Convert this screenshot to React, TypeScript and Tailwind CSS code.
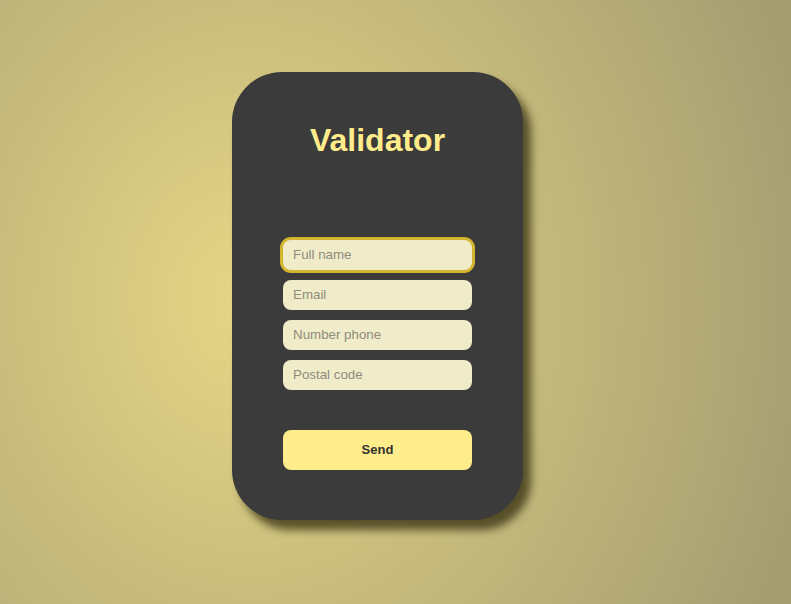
import React from "react";

const fields = ["Full name", "Email", "Number phone", "Postal code"];

const App = () => {
  return (
    <div
      className="w-[791px] h-[604px] flex justify-center pt-[72px] pr-[36px] bg-[radial-gradient(ellipse_580px_680px_at_250px_300px,#e6d685_0%,#a49d72_100%)]"
      style={{ fontFamily: '"Liberation Sans", Arial, sans-serif' }}
    >
      <div className="w-[291px] h-[448px] rounded-[50px] bg-[#3b3b3b] shadow-[8px_10px_8px_rgba(50,44,14,0.75)] flex flex-col items-center">
        <h1 className="mt-[50px] text-[32px] leading-[37px] font-bold text-[#ffec8a]">Validator</h1>

        {/* Form */}
        <form className="mt-[81px] flex flex-col gap-[10px] w-[189px]">
          {fields.map((f, i) => (
            <input
              key={f}
              type="text"
              placeholder={f}
              className={`h-[30px] w-full rounded-[8px] bg-[#f0ebc9] px-[10px] pb-[2px] text-[13.33px] text-[#333] placeholder:text-[#8f8c7b] outline-none ${
                i === 0 ? "ring-[3px] ring-[#d4b52f]" : ""
              }`}
            />
          ))}
          <button
            type="button"
            className="mt-[30px] h-[40px] w-full rounded-[8px] bg-[#ffec8a] text-[13px] font-bold text-[#333]"
          >
            Send
          </button>
        </form>
      </div>
    </div>
  );
};

export default App;
